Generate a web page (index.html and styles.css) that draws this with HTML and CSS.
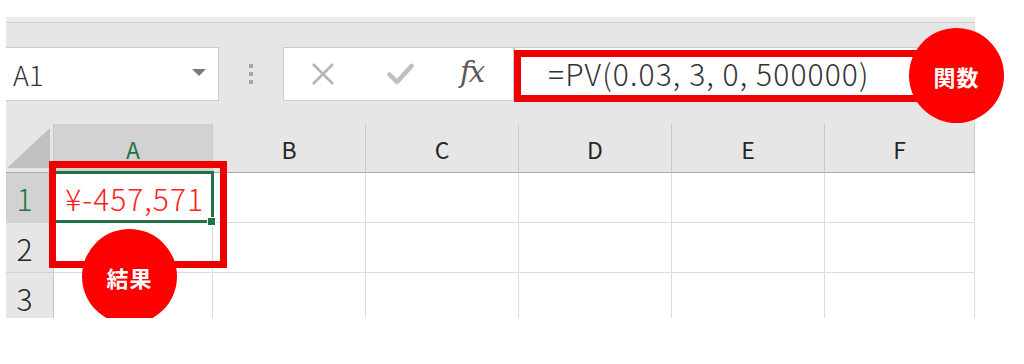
FILE: index.html
```html
<!DOCTYPE html>
<html lang="ja">
<head>
    <meta charset="UTF-8">
    <meta name="viewport" content="width=device-width, initial-scale=1.0">
    <title>PV関数</title>
    <link rel="stylesheet" href="styles.css">
</head>
<body>

    <div class="sheet">
        <div class="ribbon-edge"></div>

        <div class="formula-row">
            <div class="name-box">
                <span>A1</span>
                <span class="caret"></span>
            </div>
            <div class="grip"><i></i><i></i><i></i></div>
            <div class="fx-buttons">
                <svg class="icon-cancel" width="24" height="22" viewBox="0 0 24 22">
                    <path d="M2 1 L22 21 M22 1 L2 21" stroke="#b5b5b5" stroke-width="2.6" fill="none"/>
                </svg>
                <svg class="icon-enter" width="27" height="22" viewBox="0 0 27 22">
                    <path d="M2.5 11.5 L10 19 L24.5 3" stroke="#bfbfbf" stroke-width="4.5" fill="none" stroke-linecap="round" stroke-linejoin="round"/>
                </svg>
                <span class="fx">fx</span>
            </div>
            <div class="formula-input">=PV(0.03, 3, 0, 500000)</div>
        </div>

        <div class="grid">
            <div class="corner"></div>
            <div class="col-head active">A</div>
            <div class="col-head">B</div>
            <div class="col-head">C</div>
            <div class="col-head">D</div>
            <div class="col-head">E</div>
            <div class="col-head">F</div>

            <div class="row-head active">1</div>
            <div class="cell current">¥-457,571</div>
            <div class="cell"></div>
            <div class="cell"></div>
            <div class="cell"></div>
            <div class="cell"></div>
            <div class="cell"></div>

            <div class="row-head">2</div>
            <div class="cell"></div>
            <div class="cell"></div>
            <div class="cell"></div>
            <div class="cell"></div>
            <div class="cell"></div>
            <div class="cell"></div>

            <div class="row-head">3</div>
            <div class="cell"></div>
            <div class="cell"></div>
            <div class="cell"></div>
            <div class="cell"></div>
            <div class="cell"></div>
            <div class="cell"></div>
        </div>

        <!-- 注釈 -->
        <div class="mark mark-formula"></div>
        <div class="badge badge-func">関数</div>
        <div class="mark mark-result"></div>
        <div class="badge badge-result">結果</div>
    </div>

</body>
</html>
```

FILE: styles.css
```css
body {
    margin: 0;
    background: #ffffff;
    font-family: "Noto Sans CJK JP", "Noto Sans", sans-serif;
    font-weight: 300;
    color: #262626;
}
.sheet {
    position: relative;
    width: 969px;
    margin: 17px 0 0 6px;
    background-color: #e6e6e6;
}
.ribbon-edge {
    height: 5px;
    background-color: #ececec;
    border-bottom: 1px solid #d2d2d2;
}

/* 数式バー */
.formula-row {
    display: flex;
    align-items: center;
    height: 101px;
    padding-top: 1px;
    box-sizing: border-box;
}
.name-box {
    display: flex;
    align-items: center;
    justify-content: space-between;
    width: 213px;
    height: 54px;
    box-sizing: border-box;
    padding: 0 12px 0 7px;
    background: #ffffff;
    border: 1px solid #cdcdcd;
    border-left: none;
    font-size: 27px;
    color: #333333;
}
.caret {
    width: 0;
    height: 0;
    border-left: 7px solid transparent;
    border-right: 7px solid transparent;
    border-top: 7px solid #7a7a7a;
    margin-top: -4px;
}
.grip {
    display: flex;
    flex-direction: column;
    gap: 4px;
    margin: 0 30px 0 30px;
}
.grip i {
    display: block;
    width: 4px;
    height: 4px;
    background: #a8a8a8;
}
.fx-buttons {
    display: flex;
    align-items: center;
    width: 231px;
    height: 54px;
    box-sizing: border-box;
    padding-left: 27px;
    background: #ffffff;
    border: 1px solid #cdcdcd;
}
.icon-enter {
    margin-left: 52px;
}
.fx {
    margin-left: 46px;
    font-family: "DejaVu Serif", serif;
    font-style: italic;
    font-weight: normal;
    font-size: 29px;
    color: #595959;
    line-height: 1;
    letter-spacing: -2px;
    margin-top: -4px;
}
.formula-input {
    flex: 1;
    height: 54px;
    box-sizing: border-box;
    padding-left: 33px;
    background: #ffffff;
    border: 1px solid #cdcdcd;
    border-right: none;
    font-size: 30px;
    line-height: 50px;
    color: #333333;
    letter-spacing: 1.1px;
}

/* シート */
.grid {
    display: grid;
    grid-template-columns: 48px 159px 153px 153px 153px 153px 150px;
    grid-template-rows: 49px 50px 50px 50px;
    height: 194px;
    overflow: hidden;
    background: #ffffff;
}
.corner {
    position: relative;
    background: #e6e6e6;
    border-right: 1px solid #c6c6c6;
    border-bottom: 1px solid #a9a9a9;
}
.corner::before {
    content: "";
    position: absolute;
    left: 1px;
    top: 4px;
    width: 43px;
    height: 40px;
    background: #c0c0c0;
    clip-path: polygon(0 100%, 100% 0, 100% 100%);
}
.col-head {
    display: flex;
    align-items: center;
    justify-content: center;
    background: #e6e6e6;
    border-right: 1px solid #c9c9c9;
    border-bottom: 1px solid #a9a9a9;
    font-size: 23px;
    font-weight: normal;
    padding-top: 2px;
    color: #262626;
}
.col-head.active {
    background: #d2d2d2;
    color: #217346;
}
.row-head {
    display: flex;
    align-items: center;
    justify-content: center;
    padding-right: 10px;
    background: #e6e6e6;
    border-right: 1px solid #c6c6c6;
    border-bottom: 1px solid #d4d4d4;
    font-size: 30px;
    color: #262626;
}
.row-head.active {
    background: #d2d2d2;
    color: #217346;
}
.cell {
    border-right: 1px solid #dcdcdc;
    border-bottom: 1px solid #dcdcdc;
}
.cell.current {
    position: relative;
    display: flex;
    align-items: center;
    justify-content: flex-end;
    padding-right: 8px;
    font-size: 30px;
    color: #ff2222;
    letter-spacing: 1px;
}
.cell.current::before {
    content: "";
    position: absolute;
    left: -1px;
    top: -2px;
    right: -2px;
    bottom: -1px;
    border: 2px solid #217346;
    border-width: 3px 3px 3px 2px;
}
.cell.current::after {
    content: "";
    position: absolute;
    right: -4px;
    bottom: -4px;
    width: 7px;
    height: 7px;
    background: #217346;
    border: 1px solid #ffffff;
}

/* 注釈 */
.mark {
    position: absolute;
    box-sizing: border-box;
    border: 7px solid #ee0000;
}
.mark-formula {
    left: 508px;
    top: 33px;
    width: 410px;
    height: 52px;
}
.mark-result {
    left: 43px;
    top: 144px;
    width: 178px;
    height: 107px;
}
.badge {
    position: absolute;
    display: flex;
    align-items: center;
    justify-content: center;
    width: 95px;
    height: 95px;
    border-radius: 50%;
    background: #ff0000;
    color: #ffffff;
    font-size: 22px;
    font-weight: bold;
    letter-spacing: 1px;
}
.badge-func {
    left: 903px;
    top: 11px;
}
.badge-result {
    left: 76px;
    top: 212px;
}
```
